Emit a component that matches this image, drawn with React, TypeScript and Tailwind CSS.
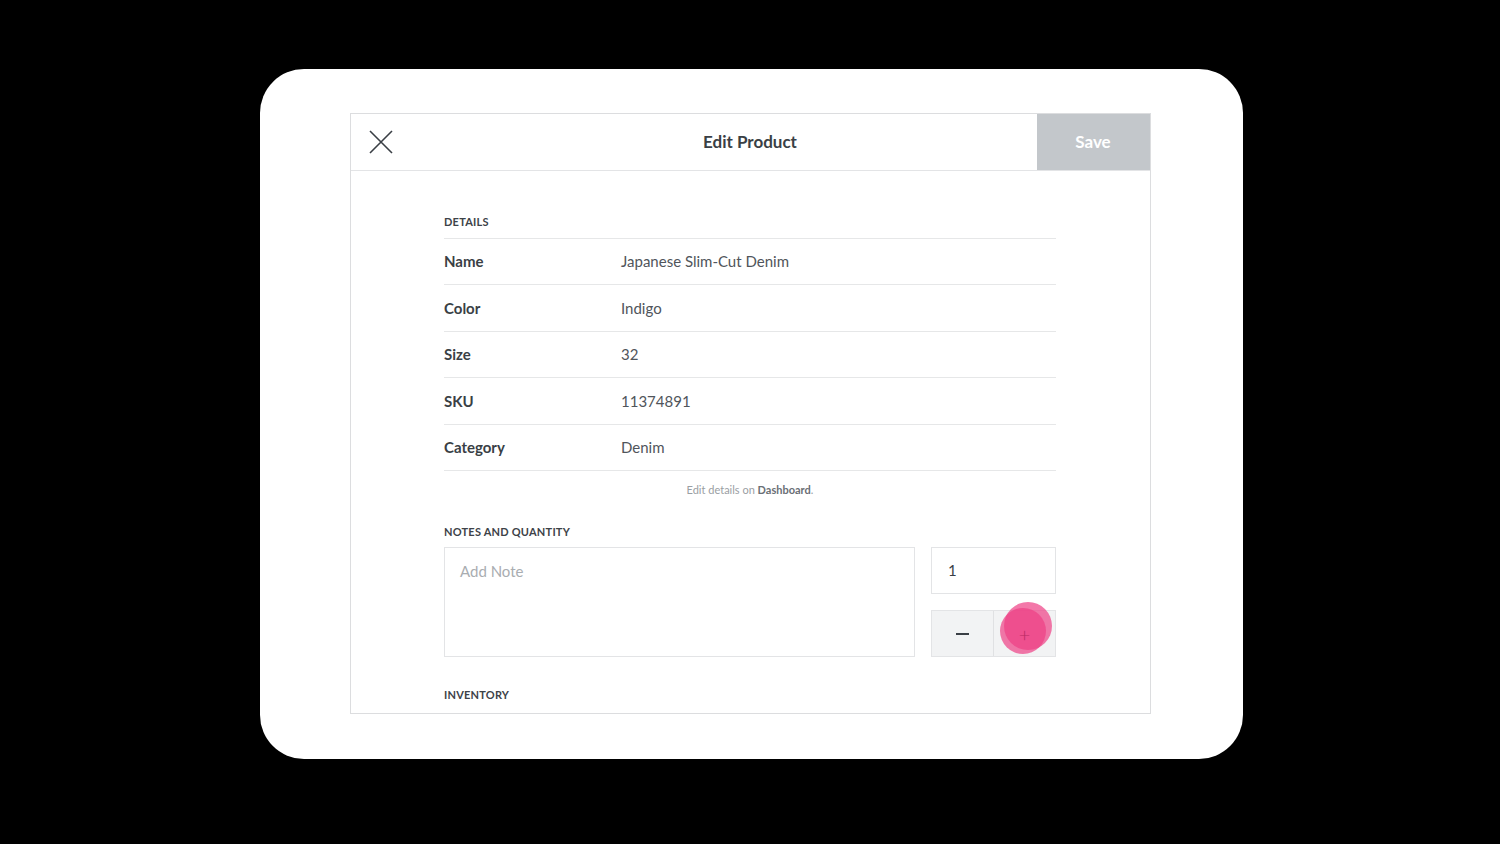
const details = [
  { label: "Name", value: "Japanese Slim-Cut Denim" },
  { label: "Color", value: "Indigo" },
  { label: "Size", value: "32" },
  { label: "SKU", value: "11374891" },
  { label: "Category", value: "Denim" },
];

function SectionLabel({ children }: { children: string }) {
  return (
    <div className="text-[11px] font-bold uppercase tracking-[0.02em] text-[#3d4248]">
      {children}
    </div>
  );
}

function DetailRow({ label, value }: { label: string; value: string }) {
  return (
    <div className="flex h-[46.5px] items-center border-b border-[#e6e7e8]">
      <div className="w-[177px] text-[15px] font-bold text-[#3a3f45]">{label}</div>
      <div className="text-[15px] text-[#50555b]">{value}</div>
    </div>
  );
}

function CloseIcon() {
  return (
    <svg width="24" height="24" viewBox="0 0 24 24" fill="none" stroke="#3a3f45" strokeWidth="1.6">
      <path d="M1 1 23 23M23 1 1 23" />
    </svg>
  );
}

// quantity stepper with the tap highlight on the plus cell
function Stepper() {
  return (
    <div className="flex flex-col gap-4 w-[125px]">
      <div className="flex h-[47px] items-center border border-[#e3e4e6] px-4 text-[15px] text-[#3a3f45]">
        1
      </div>
      <div className="flex h-[47px] border border-[#e3e4e6] bg-[#f2f3f4]">
        <button className="flex flex-1 items-center justify-center border-r border-[#e0e1e3]">
          <span className="block h-[2px] w-[13px] bg-[#3a3f45]" />
        </button>
        <button className="relative flex flex-1 items-center justify-center">
          <span className="absolute left-[10px] top-[-9px] size-[48px] rounded-full bg-[#ee3f85]/70" />
          <span className="absolute left-[6px] top-[-3px] size-[46px] rounded-full bg-[#ee3f85]/70" />
          <span className="relative text-[20px] font-light leading-none text-[#b92a63]">+</span>
        </button>
      </div>
    </div>
  );
}

export default function App() {
  return (
    <div
      className="flex h-[844px] w-[1500px] items-start justify-center bg-black pt-[69px]"
      style={{ fontFamily: "Lato, 'Open Sans', sans-serif" }}
    >
      <div className="ml-[2px] flex h-[690px] w-[983px] justify-center rounded-[44px] bg-white pt-[44px]">
        <div className="mr-[2px] flex h-[601px] w-[801px] flex-col overflow-hidden border border-[#dcdddf]">
          <header className="flex h-[57px] shrink-0 items-stretch border-b border-[#e3e4e6]">
            <div className="flex w-[113px] items-center pl-[18px]">
              <CloseIcon />
            </div>
            <div className="flex flex-1 items-center justify-center text-[17px] font-bold text-[#3a3f45]">
              Edit Product
            </div>
            <button className="w-[113px] bg-[#c3c7cb] text-[17px] font-bold text-white">Save</button>
          </header>

          <div className="mx-auto w-[612px] pt-[43px]">
            <SectionLabel>Details</SectionLabel>
            <div className="mt-[7px] border-t border-[#e6e7e8]">
              {details.map((d) => (
                <DetailRow key={d.label} label={d.label} value={d.value} />
              ))}
            </div>
            <p className="mt-[11px] text-center text-[11px] text-[#9a9ea3]">
              Edit details on <span className="font-bold text-[#6a6f75]">Dashboard</span>.
            </p>

            <div className="mt-[25px]">
              <SectionLabel>Notes and Quantity</SectionLabel>
            </div>
            <div className="mt-[7px] flex gap-4">
              <div className="h-[110px] flex-1 border border-[#e3e4e6] px-[15px] pt-[12px] text-[15px] text-[#a9adb1]">
                Add Note
              </div>
              <Stepper />
            </div>

            <div className="mt-[30px]">
              <SectionLabel>Inventory</SectionLabel>
            </div>
          </div>
        </div>
      </div>
    </div>
  );
}
